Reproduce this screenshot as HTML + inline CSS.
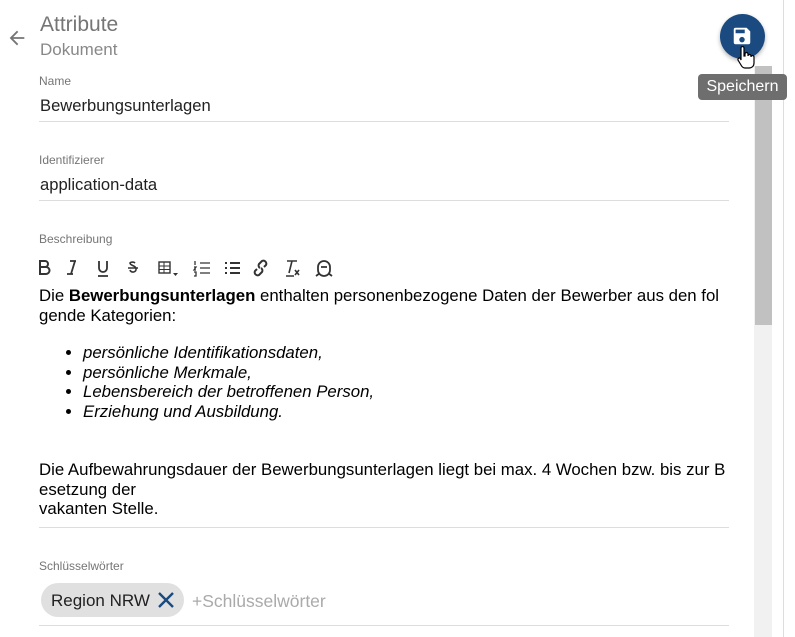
<!DOCTYPE html>
<html><head><style>
body{margin:0;width:795px;height:637px;overflow:hidden;background:#fff;font-family:"Liberation Sans",Arial,sans-serif;position:relative}
.a{position:absolute;white-space:nowrap}
.lbl{font-size:12px;color:#757575}
.val{font-size:16.6px;color:#212121}
.line{position:absolute;left:39px;width:690px;height:1px;background:#ddd}
.txt{font-size:16.8px;color:#000;line-height:19.5px}
svg.i{position:absolute;top:258px}
</style></head><body>
<svg class="a" style="left:6px;top:27px" width="22" height="22" viewBox="0 0 24 24"><path d="M20 11H7.8l5.6-5.6L12 4l-8 8 8 8 1.4-1.4L7.8 13H20z" fill="#757575"/></svg>
<div class="a" style="left:40px;top:13px;font-size:21px;color:#757575">Attribute</div>
<div class="a" style="left:40px;top:40px;font-size:17px;color:#888">Dokument</div>
<div class="a" style="left:720px;top:14px;width:45px;height:45px;border-radius:50%;background:#1a4a80;box-shadow:0 2px 4px rgba(0,0,0,.3)"></div>
<svg class="a" style="left:731px;top:25px" width="22" height="22" viewBox="0 0 24 24"><path d="M17 3H5a2 2 0 0 0-2 2v14a2 2 0 0 0 2 2h14a2 2 0 0 0 2-2V7l-4-4zm-5 16a3 3 0 1 1 0-6 3 3 0 0 1 0 6zm3-10H5V5h10v4z" fill="#fff"/></svg>
<svg class="a" style="left:736px;top:46px" width="20" height="24" viewBox="0 0 20 24"><path d="M5 2a1.5 1.5 0 0 1 3 0v8h1V8a1.5 1.5 0 0 1 3 0v2h0a1.5 1.5 0 0 1 3 0v1a1.5 1.5 0 0 1 3 0v6c0 3-2 5-5 5H9c-2 0-3-1-4-3L2 14a1.5 1.5 0 0 1 2.5-1.5L5 14z" fill="#fff" stroke="#000" stroke-width="1.2"/></svg>
<div class="a" style="left:754px;top:66px;width:18px;height:571px;background:#f1f1f1"></div>
<div class="a" style="left:755px;top:66px;width:17px;height:259px;background:#c1c1c1"></div>
<div class="a" style="left:783px;top:0;width:1px;height:637px;background:#ddd"></div>
<div class="a" style="left:698px;top:74px;width:89px;height:26px;border-radius:4px;background:#6e6e6e;color:#fff;font-size:16px;line-height:26px;text-align:center">Speichern</div>
<div class="a lbl" style="left:39px;top:74px">Name</div>
<div class="a val" style="left:40px;top:96px">Bewerbungsunterlagen</div>
<div class="line" style="top:121px"></div>
<div class="a lbl" style="left:39px;top:153px">Identifizierer</div>
<div class="a val" style="left:40px;top:175px">application-data</div>
<div class="line" style="top:200px"></div>
<div class="a lbl" style="left:39px;top:232px">Beschreibung</div>
<svg class="i" style="left:36px" width="300" height="20" viewBox="0 0 300 20" fill="none" stroke="#333" stroke-width="2">
<path d="M4 3h5a3 3 0 0 1 0 6H4zM4 9h6a3.5 3.5 0 0 1 0 7H4z"/>
<path d="M34 3h6M31 16h6M39 3l-4 13" stroke-width="1.8"/>
<path d="M63 3v7a4 4 0 0 0 8 0V3M62 18h10" stroke-width="1.8"/>
<path d="M99 5a3 2 0 0 0-5 0c0 3 6 2 6 6a3 2.5 0 0 1-6 1M92 10h10" stroke-width="1.6"/>
<rect x="123" y="4" width="11" height="11" stroke-width="1.4"/><path d="M123 8h11M123 11.5h11M128 4v11" stroke-width="1"/><path d="M137 15h5l-2.5 3z" fill="#333" stroke="none"/>
<path d="M164 5h10M164 10h10M164 15h10M159 3v4M158 9h2l-2 3h2M158 14h2v4h-2" stroke-width="1.3"/>
<path d="M194 5h10M194 10h10M194 15h10M189 5h2M189 10h2M189 15h2" stroke-width="2"/>
<path d="M221 11l-2 2a3 3 0 0 0 4 4l3-3a3 3 0 0 0-1-4M228 9l2-2a3 3 0 0 0-4-4l-3 3a3 3 0 0 0 1 4" stroke-width="2"/>
<path d="M251 3h10M256 3l-3 12M250 18h8M259 12l4 5M263 12l-4 5" stroke-width="1.6"/>
<path d="M282 9a6 6 0 0 1 12 0v3a6 6 0 0 1-12 0zM285 9h6M280 18l4-3M296 18l-4-3" stroke-width="1.8"/>
</svg>
<div class="a txt" style="left:39px;top:286px">Die <b>Bewerbungsunterlagen</b> enthalten personenbezogene Daten der Bewerber aus den fol<br>gende Kategorien:</div>
<ul class="a txt" style="left:39px;top:343px;margin:0;padding-left:44px;font-style:italic">
<li>persönliche Identifikationsdaten,</li><li>persönliche Merkmale,</li><li>Lebensbereich der betroffenen Person,</li><li>Erziehung und Ausbildung.</li></ul>
<div class="a txt" style="left:39px;top:460px">Die Aufbewahrungsdauer der Bewerbungsunterlagen liegt bei max. 4 Wochen bzw. bis zur B<br>esetzung der<br>vakanten Stelle.</div>
<div class="line" style="top:527px"></div>
<div class="a lbl" style="left:39px;top:559px">Schlüsselwörter</div>
<div class="a" style="left:41px;top:583px;width:143px;height:34px;border-radius:17px;background:#e0e0e0"></div>
<div class="a val" style="left:51px;top:591px;font-size:17px">Region NRW</div>
<svg class="a" style="left:157px;top:591px" width="18" height="18" viewBox="0 0 18 18"><path d="M2 2L16 16M16 2L2 16" stroke="#1a4a80" stroke-width="2.4"/></svg>
<div class="a" style="left:192px;top:591px;font-size:17.5px;color:#aaa">+Schlüsselwörter</div>
<div class="line" style="top:625px"></div>
</body></html>
